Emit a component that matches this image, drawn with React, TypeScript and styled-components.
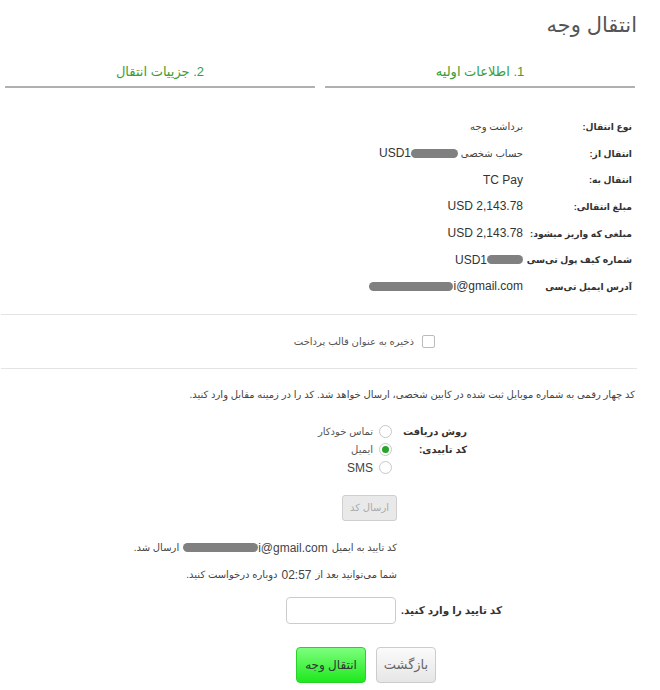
import React from "react";
import styled, { createGlobalStyle } from "styled-components";

const Global = createGlobalStyle`
  html, body { margin: 0; padding: 0; background: #fff; }
  body { font-family: "Liberation Sans", "DejaVu Sans", sans-serif; color: #333; }
  * { box-sizing: border-box; }
`;

const Page = styled.div`
  direction: rtl;
  width: 660px;
  padding: 0 23px 0 0;
  display: flex;
  flex-direction: column;
`;

const Title = styled.h1`
  margin: 10px 0 0 0;
  font-size: 21px;
  line-height: 30px;
  font-weight: normal;
  color: #555;
  padding-right: 0;
`;

const Tabs = styled.div`
  display: flex;
  gap: 10px;
  margin: 18px 0 0 0;
  padding-left: 5px;
  padding-right: 2px;
`;

const Tab = styled.div`
  flex: 1;
  height: 30px;
  line-height: 28px;
  text-align: center;
  color: #3a9d3a;
  font-size: 13px;
  border-bottom: 2px solid #b0b0b0;
`;

const InfoList = styled.div`
  display: grid;
  grid-template-columns: 109px 1fr;
  grid-auto-rows: 26.7px;
  align-items: center;
  margin-top: 25px;
  padding-right: 5px;
`;

const Label = styled.div`
  font-size: 9.2px;
  font-weight: bold;
  color: #333;
  white-space: nowrap;
`;

const Value = styled.div`
  font-size: 12px;
  color: #333;
`;

const Fa = styled.span`
  font-size: 10px;
  color: #444;
`;

const Ltr = styled.span`
  direction: ltr;
  unicode-bidi: isolate;
  display: inline-flex;
  align-items: center;
`;

const Mask = styled.span<{ $w: number }>`
  display: inline-block;
  width: ${(p) => p.$w}px;
  height: 9px;
  border-radius: 5px;
  background: #808080;
`;

const Divider = styled.hr`
  border: none;
  border-top: 1px solid #e4e4e4;
  margin: 0;
  width: 636px;
`;

const CheckRow = styled.label`
  display: flex;
  align-items: center;
  gap: 8px;
  height: 53px;
  padding-right: 202px;
  font-size: 10px;
  color: #555;
`;

const Box = styled.span`
  width: 13px;
  height: 13px;
  border: 1px solid #bbb;
  border-radius: 2px;
  background: #fff;
`;

const Note = styled.p`
  margin: 18px 0 0 0;
  font-size: 10px;
  color: #444;
  line-height: 16px;
  padding-right: 2px;
`;

const RadioGroup = styled.div`
  display: flex;
  gap: 7px;
  margin: 20px 170px 0 0;
`;

const GroupLabel = styled.div`
  width: 68px;
  font-size: 10px;
  font-weight: bold;
  line-height: 18px;
  color: #333;
  white-space: nowrap;
`;

const Options = styled.div`
  display: flex;
  flex-direction: column;
`;

const Option = styled.div`
  display: flex;
  align-items: center;
  gap: 6px;
  height: 18px;
  font-size: 10px;
  color: #555;
`;

const Radio = styled.span<{ $on?: boolean }>`
  width: 13px;
  height: 13px;
  border-radius: 50%;
  border: 1px solid #c8c8c8;
  background: #fff;
  display: flex;
  align-items: center;
  justify-content: center;
  &::after {
    content: "";
    width: 7px;
    height: 7px;
    border-radius: 50%;
    background: ${(p) => (p.$on ? "#27a52b" : "transparent")};
  }
`;

const Latin = styled.span`
  font-size: 12px;
  color: #444;
`;

const SendButton = styled.button`
  align-self: flex-start;
  margin: 18px 240px 0 0;
  width: 55px;
  height: 26px;
  border: 1px solid #cfcfcf;
  border-radius: 3px;
  background: #e9e9e9;
  color: #aaa;
  font-family: inherit;
  font-size: 10px;
  padding: 0;
`;

const Line = styled.div<{ $mt: number }>`
  margin: ${(p) => p.$mt}px 240px 0 0;
  font-size: 10px;
  color: #444;
  line-height: 18px;
  display: flex;
  align-items: center;
  gap: 4px;
`;

const CodeRow = styled.div`
  display: flex;
  align-items: center;
  gap: 10px;
  margin: 13px 135px 0 0;
`;

const CodeLabel = styled.div`
  font-size: 10.5px;
  font-weight: bold;
  color: #333;
  width: 96px;
  white-space: nowrap;
`;

const CodeInput = styled.input`
  width: 110px;
  height: 27px;
  border: 1px solid #ccc;
  border-radius: 4px;
`;

const Actions = styled.div`
  display: flex;
  gap: 10px;
  margin: 23px 201px 0 0;
`;

const BackButton = styled.button`
  width: 60px;
  height: 36px;
  border: 1px solid #ccc;
  border-radius: 4px;
  background: linear-gradient(#fbfbfb, #e6e6e6);
  color: #666;
  font-family: inherit;
  font-size: 13px;
  padding: 0;
`;

const SubmitButton = styled.button`
  width: 70px;
  height: 36px;
  border: 1px solid #2bd12b;
  border-radius: 4px;
  background: linear-gradient(#7dff7d, #1ee81e);
  color: #333;
  font-family: inherit;
  font-size: 12px;
  padding: 0;
`;

const rows: [string, React.ReactNode][] = [
  ["نوع انتقال:", <Fa>برداشت وجه</Fa>],
  [
    "انتقال از:",
    <>
      <Fa>حساب شخصی </Fa>
      <Ltr>USD1<Mask $w={47} /></Ltr>
    </>,
  ],
  ["انتقال به:", <Ltr>TC Pay</Ltr>],
  ["مبلغ انتقالی:", <Ltr>USD 2,143.78</Ltr>],
  ["مبلغی که واریز میشود:", <Ltr>USD 2,143.78</Ltr>],
  ["شماره کیف پول تی‌سی", <Ltr>USD1<Mask $w={36} /></Ltr>],
  ["آدرس ایمیل تی‌سی", <Ltr><Mask $w={84} />i@gmail.com</Ltr>],
];

export default function App() {
  return (
    <>
      <Global />
      <Page>
        <Title>انتقال وجه</Title>
        <Tabs>
          <Tab>1. اطلاعات اولیه</Tab>
          <Tab>2. جزییات انتقال</Tab>
        </Tabs>
        <InfoList>
          {rows.map(([l, v], i) => (
            <React.Fragment key={i}>
              <Label>{l}</Label>
              <Value>{v}</Value>
            </React.Fragment>
          ))}
        </InfoList>
        <Divider style={{ marginTop: 14 }} />
        <CheckRow>
          <Box />
          ذخیره به عنوان قالب پرداخت
        </CheckRow>
        <Divider />
        <Note>
          کد چهار رقمی به شماره موبایل ثبت شده در کابین شخصی، ارسال خواهد شد. کد را در زمینه مقابل وارد کنید.
        </Note>
        <RadioGroup>
          <GroupLabel>
            روش دریافت
            <br />
            کد تاییدی:
          </GroupLabel>
          <Options>
            <Option><Radio />تماس خودکار</Option>
            <Option><Radio $on />ایمیل</Option>
            <Option><Radio /><Latin>SMS</Latin></Option>
          </Options>
        </RadioGroup>
        <SendButton disabled>ارسال کد</SendButton>
        <Line $mt={18}>
          کد تایید به ایمیل
          <Ltr><Mask $w={75} /><Latin>i@gmail.com</Latin></Ltr>
          ارسال شد.
        </Line>
        <Line $mt={9}>
          شما می‌توانید بعد از <Latin>02:57</Latin> دوباره درخواست کنید.
        </Line>
        <CodeRow>
          <CodeLabel>کد تایید را وارد کنید.</CodeLabel>
          <CodeInput />
        </CodeRow>
        <Actions>
          <BackButton>بازگشت</BackButton>
          <SubmitButton>انتقال وجه</SubmitButton>
        </Actions>
      </Page>
    </>
  );
}
